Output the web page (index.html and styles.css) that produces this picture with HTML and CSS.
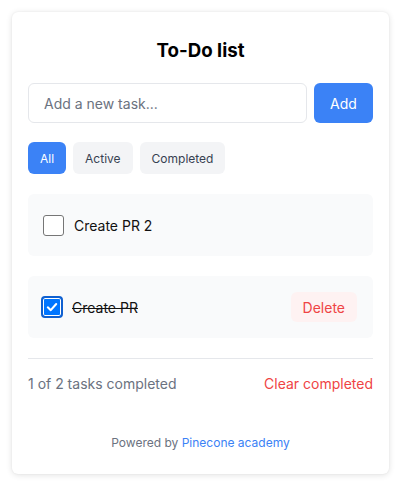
FILE: index.html
```html
<!DOCTYPE html>
<html>
<head>
<meta charset="utf-8">
<link rel="stylesheet" href="styles.css">
</head>
<body>
<div class="card">
  <h1 class="title">To-Do list</h1>
  <div class="add-row">
    <input class="task-input" type="text" placeholder="Add a new task...">
    <button class="add-btn">Add</button>
  </div>
  <div class="filters">
    <button class="filter active">All</button>
    <button class="filter">Active</button>
    <button class="filter">Completed</button>
  </div>
  <ul class="tasks">
    <li class="task">
      <span class="check"></span>
      <span class="task-text">Create PR 2</span>
    </li>
    <li class="task">
      <span class="check checked">
        <svg viewBox="0 0 16 16" width="14" height="14"><path d="M3.2 8.4 L6.6 11.6 L12.8 4.6" fill="none" stroke="#fff" stroke-width="2.4" stroke-linecap="round" stroke-linejoin="round"/></svg>
      </span>
      <span class="task-text done">Create PR</span>
      <button class="delete-btn">Delete</button>
    </li>
  </ul>
  <div class="summary">
    <span class="count">1 of 2 tasks completed</span>
    <button class="clear-btn">Clear completed</button>
  </div>
  <p class="powered">Powered by <span class="brand">Pinecone academy</span></p>
</div>
</body>
</html>
```
FILE: styles.css
```css
* { box-sizing: border-box; }
html, body { margin: 0; padding: 0; background: #ffffff; }
body {
  font-family: Inter, "Noto Sans", sans-serif;
  color: #111827;
  padding: 12px;
}
.card {
  background: #fff;
  border-radius: 6px;
  box-shadow: 0 1px 6px rgba(0,0,0,0.12), 0 0 2px rgba(0,0,0,0.06);
  padding: 25px 16px 24px;
  height: 462px;
  display: flex;
  flex-direction: column;
}
.title {
  margin: 0;
  text-align: center;
  font-size: 18.7px;
  font-weight: 700;
  line-height: 28px;
  color: #000;
}
.add-row {
  display: flex;
  gap: 7px;
  margin-top: 18px;
}
.task-input {
  flex: 1;
  height: 40px;
  border: 1px solid #e5e7eb;
  border-radius: 6px;
  padding: 0 15px;
  font-family: inherit;
  font-size: 14px;
  color: #111827;
  outline: none;
}
.task-input::placeholder { color: #6b7280; }
.add-btn {
  width: 59px;
  height: 40px;
  border: none;
  border-radius: 6px;
  background: #3b82f6;
  color: #fff;
  font-family: inherit;
  font-size: 14px;
}
.filters {
  display: flex;
  gap: 7px;
  margin-top: 19px;
}
.filter {
  height: 32px;
  padding: 0 12px;
  border: none;
  border-radius: 6px;
  background: #f3f4f6;
  color: #374151;
  font-family: inherit;
  font-size: 12px;
}
.filter.active { background: #3b82f6; color: #fff; }
.tasks {
  list-style: none;
  margin: 20px 0 0;
  padding: 0;
  display: flex;
  flex-direction: column;
  gap: 20px;
}
.task {
  display: flex;
  align-items: center;
  background: #f9fafb;
  border-radius: 6px;
  padding: 16px 16px 16px 15px;
  min-height: 62px;
}
.check {
  width: 21px;
  height: 21px;
  border: 1px solid #767676;
  border-radius: 3px;
  background: #fff;
  display: flex;
  align-items: center;
  justify-content: center;
  flex: none;
}
.check.checked {
  width: 22px;
  height: 22px;
  margin-left: -2px;
  margin-right: -1px;
  background: #0075ff;
  border: 2px solid #1060d0;
  box-shadow: inset 0 0 0 1px #fff;
  border-radius: 4px;
}
.task-text {
  margin-left: 10px;
  font-size: 14px;
  color: #111;
  flex: 1;
}
.task-text.done { text-decoration: line-through; color: #111; }
.delete-btn {
  height: 30px;
  padding: 0 12px;
  border: none;
  border-radius: 6px;
  background: #fef2f2;
  color: #ef4444;
  font-family: inherit;
  font-size: 14px;
}
.summary {
  margin-top: 20px;
  border-top: 1px solid #e5e7eb;
  padding-top: 16px;
  display: flex;
  justify-content: space-between;
  align-items: center;
  font-size: 14px;
}
.count { color: #6b7280; }
.clear-btn {
  border: none;
  background: none;
  padding: 0;
  color: #ef4444;
  font-family: inherit;
  font-size: 14px;
}
.powered {
  margin: auto 0 0;
  text-align: center;
  font-size: 12px;
  color: #6b7280;
  padding-bottom: 0;
}
.brand { color: #3b82f6; }
```
